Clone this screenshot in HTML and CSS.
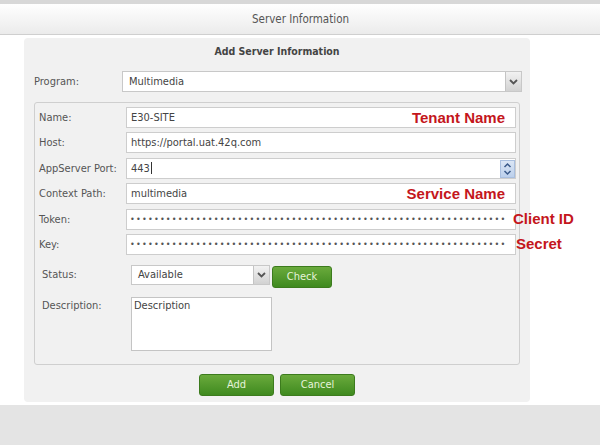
FILE: index.html
```html
<!DOCTYPE html>
<html>
<head>
<meta charset="utf-8">
<link rel="stylesheet" href="styles.css">
</head>
<body>
<div class="strip"></div>
<div class="header">Server Information</div>
<div class="panel">
  <div class="title">Add Server Information</div>
  <div class="program-row">
    <div class="label">Program:</div>
    <div class="select wide"><span class="val">Multimedia</span><span class="arrow"><svg width="9" height="6" viewBox="0 0 9 6"><path d="M1 1 L4.5 4.5 L8 1" fill="none" stroke="#555" stroke-width="1.8"/></svg></span></div>
  </div>
  <div class="box">
    <div class="grid">
      <div class="label">Name:</div>
      <div class="field">E30-SITE<span class="note in">Tenant Name</span></div>
      <div class="label">Host:</div>
      <div class="field">https://portal.uat.42q.com</div>
      <div class="label">AppServer Port:</div>
      <div class="field">443<span class="caret"></span><span class="spin"><svg width="9" height="16" viewBox="0 0 9 16"><path d="M1.5 6 L4.5 3 L7.5 6 M1.5 10 L4.5 13 L7.5 10" fill="none" stroke="#3a5a8a" stroke-width="1.5"/></svg></span></div>
      <div class="label">Context Path:</div>
      <div class="field">multimedia<span class="note in">Service Name</span></div>
      <div class="label">Token:</div>
      <div class="field dots">•••••••••••••••••••••••••••••••••••••••••••••••••••••••••••••••<span class="note out">Client ID</span></div>
      <div class="label">Key:</div>
      <div class="field dots">•••••••••••••••••••••••••••••••••••••••••••••••••••••••••••••••<span class="note out secret">Secret</span></div>
    </div>
    <div class="status-row">
      <div class="label2">Status:</div>
      <div class="select small"><span class="val">Available</span><span class="arrow"><svg width="9" height="6" viewBox="0 0 9 6"><path d="M1 1 L4.5 4.5 L8 1" fill="none" stroke="#555" stroke-width="1.8"/></svg></span></div>
      <div class="btn check">Check</div>
    </div>
    <div class="desc-row">
      <div class="label2">Description:</div>
      <div class="textarea">Description</div>
    </div>
  </div>
  <div class="actions">
    <div class="btn action">Add</div>
    <div class="btn action">Cancel</div>
  </div>
</div>
<div class="footer"></div>
</body>
</html>
```
FILE: styles.css
```css
html, body {
  margin: 0;
  padding: 0;
  background: #ffffff;
  font-family: "DejaVu Sans Condensed", "DejaVu Sans", sans-serif;
  color: #555;
  font-size: 11px;
}
.strip {
  height: 4px;
  background: #d8d8d8;
}
.header {
  height: 30px;
  line-height: 31px;
  text-align: center;
  font-size: 11.5px;
  color: #555;
  background: linear-gradient(#ffffff, #ebebeb);
  border-bottom: 1px solid #cfcfcf;
  padding-left: 1px;
}
.panel {
  margin: 3px 0 0 24px;
  width: 486px;
  padding: 6px 10px 6px 10px;
  background: #f1f1f1;
  border-radius: 4px;
}
.title {
  text-align: center;
  font-weight: bold;
  font-size: 10.5px;
  line-height: 14px;
  color: #444;
}
.program-row {
  display: flex;
  align-items: center;
  margin-top: 13px;
  height: 21px;
}
.program-row .label {
  width: 88px;
  flex-shrink: 0;
}
.select {
  display: flex;
  align-items: stretch;
  flex-shrink: 0;
  background: #fff;
  border: 1px solid #c8c8c8;
  box-sizing: border-box;
}
.select .val {
  flex: 1;
  padding-left: 6px;
  display: flex;
  align-items: center;
  color: #444;
}
.select .arrow {
  width: 15px;
  background: linear-gradient(#f2f2f2, #d2d2d2);
  border-left: 1px solid #c4c4c4;
  display: flex;
  align-items: center;
  justify-content: center;
}
.select.wide {
  width: 400px;
  height: 21px;
}
.select.small {
  width: 139px;
  height: 20px;
}
.box {
  margin-top: 10px;
  border: 1px solid #cfcfcf;
  border-radius: 3px;
  padding: 4px 3px 13px 4px;
}
.grid {
  display: grid;
  grid-template-columns: 87px 390px;
  grid-auto-rows: 21px;
  row-gap: 4.4px;
  align-items: center;
}
.field {
  position: relative;
  height: 21px;
  box-sizing: border-box;
  background: #fff;
  border: 1px solid #cdcdcd;
  padding-left: 4px;
  display: flex;
  align-items: center;
  color: #444;
}
.field.dots {
  font-size: 9px;
  letter-spacing: 1.2px;
  color: #555;
  padding-left: 3px;
}
.caret {
  width: 1px;
  height: 12px;
  background: #333;
  margin-left: 1px;
}
.spin {
  position: absolute;
  right: 0;
  top: 1px;
  width: 15px;
  height: 18px;
  background: linear-gradient(#dbe6f5, #bcd0ec);
  border: 1px solid #a9bfdf;
  box-sizing: border-box;
  display: flex;
  align-items: center;
  justify-content: center;
}
.note {
  position: absolute;
  font-family: "Liberation Sans", Arial, sans-serif;
  font-weight: bold;
  font-size: 15px;
  letter-spacing: 0;
  color: #c4161c;
  top: 50%;
  transform: translateY(-52%);
  white-space: nowrap;
}
.note.in {
  right: 10px;
}
.note.out {
  left: 386px;
}
.note.secret {
  left: 389px;
}
.status-row {
  display: flex;
  align-items: flex-start;
  margin-top: 10px;
  padding-left: 3px;
}
.status-row .label2 {
  line-height: 20px;
}
.label2 {
  width: 89px;
  flex-shrink: 0;
}
.btn {
  box-sizing: border-box;
  display: flex;
  align-items: center;
  justify-content: center;
  color: #e6f3da;
  background: linear-gradient(#6aaa3c, #3f8a1f);
  border: 1px solid #3c7b1d;
  border-radius: 3px;
  font-size: 11px;
}
.check {
  width: 60px;
  height: 22px;
  margin-left: 2px;
  margin-top: 1px;
}
.desc-row {
  display: flex;
  align-items: flex-start;
  margin-top: 9px;
  padding-left: 3px;
}
.desc-row .label2 {
  padding-top: 2px;
}
.textarea {
  width: 141px;
  height: 54px;
  box-sizing: border-box;
  background: #fff;
  border: 1px solid #c4c4c4;
  padding: 1px 2px;
  color: #444;
}
.actions {
  display: flex;
  justify-content: center;
  gap: 6px;
  margin-top: 9px;
}
.action {
  width: 75px;
  height: 22px;
}
.footer {
  margin-top: 3px;
  height: 41px;
  background: #e4e4e4;
}
```
